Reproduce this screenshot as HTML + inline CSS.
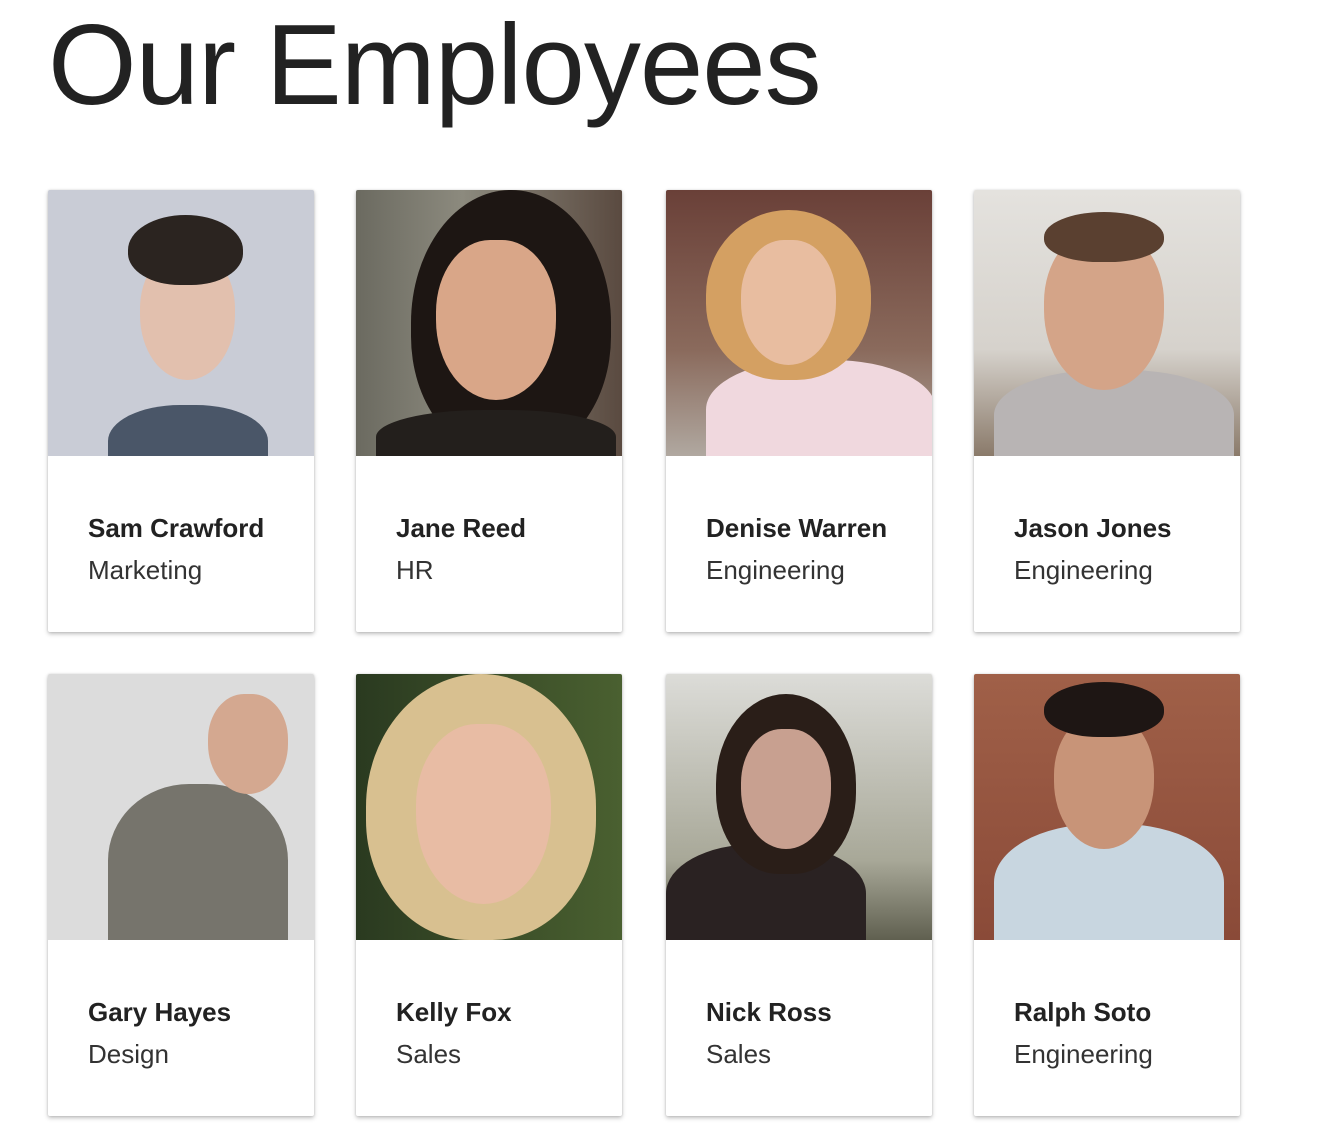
<!DOCTYPE html>
<html><head><meta charset="utf-8"><style>
body{margin:0;background:#fff;width:1318px;height:1140px;overflow:hidden;font-family:"Liberation Sans",sans-serif;color:#212121}
h1{position:absolute;left:48px;top:0px;margin:0;font-weight:normal;font-size:114px;letter-spacing:-1px;color:#222}
.card{position:absolute;width:266px;height:442px;background:#fff;box-shadow:0 2px 4px rgba(0,0,0,.25),0 0 2px rgba(0,0,0,.12);border-radius:2px;overflow:hidden}
.ph{position:relative;width:266px;height:266px;overflow:hidden}
.ph .hair{position:absolute;border-radius:50% 50% 45% 45%}
.ph .face{position:absolute;border-radius:45% 45% 50% 50%}
.ph .body{position:absolute;border-radius:45% 45% 0 0}
.n{position:absolute;left:40px;top:323px;font-size:26px;font-weight:bold;color:#222}
.d{position:absolute;left:40px;top:365px;font-size:26px;color:#333}
</style></head><body>
<h1>Our Employees</h1>

<div class="card" style="left:48px;top:190px"><div class="ph" style="background:#c9ccd6">
<div class="body" style="left:60px;top:215px;width:160px;height:80px;background:#4a5668"></div>
<div class="face" style="left:92px;top:60px;width:95px;height:130px;background:#e2c0ae"></div>
<div class="hair" style="left:80px;top:25px;width:115px;height:70px;background:#2b2420"></div>
</div><div class="n">Sam Crawford</div><div class="d">Marketing</div></div>

<div class="card" style="left:356px;top:190px"><div class="ph" style="background:linear-gradient(90deg,#6b6a60,#8c8a7e 40%,#5a4a40)">
<div class="hair" style="left:55px;top:0;width:200px;height:266px;background:#1d1613"></div>
<div class="body" style="left:20px;top:220px;width:240px;height:60px;background:#231f1c"></div>
<div class="face" style="left:80px;top:50px;width:120px;height:160px;background:#d9a688"></div>
</div><div class="n">Jane Reed</div><div class="d">HR</div></div>

<div class="card" style="left:666px;top:190px"><div class="ph" style="background:linear-gradient(180deg,#6a4038,#8a6a5c 60%,#b0a8a0)">
<div class="body" style="left:40px;top:170px;width:230px;height:110px;background:#f0d8de"></div>
<div class="hair" style="left:40px;top:20px;width:165px;height:170px;background:#d4a062"></div>
<div class="face" style="left:75px;top:50px;width:95px;height:125px;background:#e8bda0"></div>
</div><div class="n">Denise Warren</div><div class="d">Engineering</div></div>

<div class="card" style="left:974px;top:190px"><div class="ph" style="background:linear-gradient(180deg,#e4e2de,#d6d2cc 60%,#8a7a6a)">
<div class="body" style="left:20px;top:180px;width:240px;height:100px;background:#b8b4b4"></div>
<div class="face" style="left:70px;top:40px;width:120px;height:160px;background:#d4a488"></div>
<div class="hair" style="left:70px;top:22px;width:120px;height:50px;background:#5a4030"></div>
</div><div class="n">Jason Jones</div><div class="d">Engineering</div></div>

<div class="card" style="left:48px;top:674px"><div class="ph" style="background:#dcdcdc">
<div class="body" style="left:60px;top:110px;width:180px;height:170px;background:#76746c"></div>
<div class="face" style="left:160px;top:20px;width:80px;height:100px;background:#d4a890"></div>
</div><div class="n">Gary Hayes</div><div class="d">Design</div></div>

<div class="card" style="left:356px;top:674px"><div class="ph" style="background:linear-gradient(90deg,#2a3a20,#4a6030)">
<div class="hair" style="left:10px;top:0;width:230px;height:266px;background:#d8c090"></div>
<div class="face" style="left:60px;top:50px;width:135px;height:180px;background:#e8bca4"></div>
</div><div class="n">Kelly Fox</div><div class="d">Sales</div></div>

<div class="card" style="left:666px;top:674px"><div class="ph" style="background:linear-gradient(180deg,#dcdcd8,#a8a898 70%,#606050)">
<div class="body" style="left:0;top:170px;width:200px;height:110px;background:#2a2222"></div>
<div class="hair" style="left:50px;top:20px;width:140px;height:180px;background:#2a1e18"></div>
<div class="face" style="left:75px;top:55px;width:90px;height:120px;background:#c8a090"></div>
</div><div class="n">Nick Ross</div><div class="d">Sales</div></div>

<div class="card" style="left:974px;top:674px"><div class="ph" style="background:linear-gradient(180deg,#a06048,#8a4a38)">
<div class="body" style="left:20px;top:150px;width:230px;height:130px;background:#c8d6e0"></div>
<div class="face" style="left:80px;top:40px;width:100px;height:135px;background:#c89478"></div>
<div class="hair" style="left:70px;top:8px;width:120px;height:55px;background:#1e1614"></div>
</div><div class="n">Ralph Soto</div><div class="d">Engineering</div></div>
</body></html>
